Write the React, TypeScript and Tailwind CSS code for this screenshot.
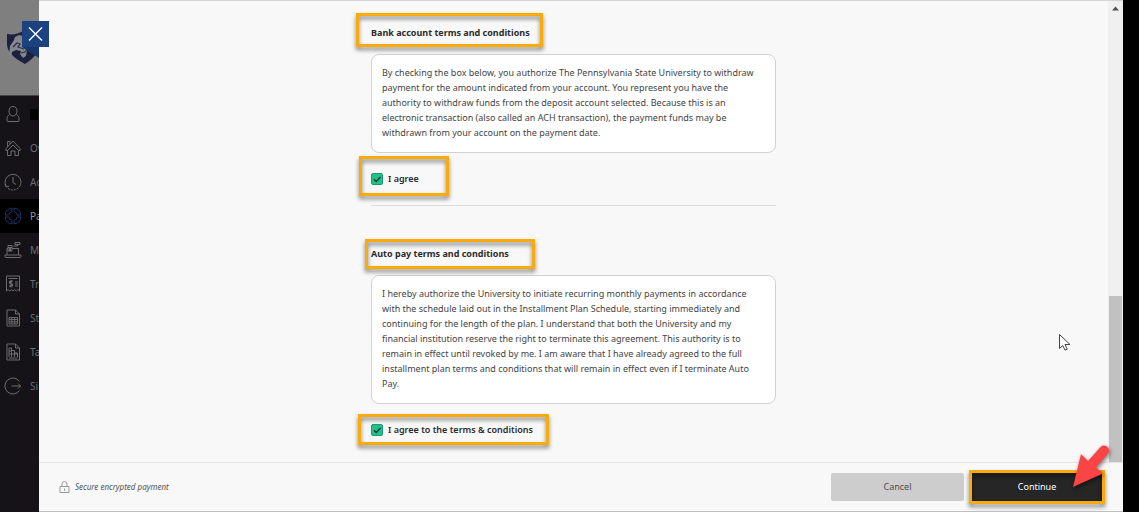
import React from 'react';

const ICON = 'w-[18px] h-[18px] shrink-0';

const line = {
  fill: 'none',
  stroke: 'currentColor',
  strokeWidth: 1,
  viewBox: '0 0 18 18',
  'aria-hidden': true,
};

const PersonIcon = () => (
  <svg {...line} className={ICON}>
    <path d="M9 1.500C6.400 1.500 5 3.400 5 6s1.400 5 4 5 4-2.400 4-5-1.400-4.500-4-4.500z" />
    <path d="M5.500 9.500C4 10.500 3 11.500 3 14v1.500c0 .7.3 1 1 1h10c.7 0 1-.3 1-1V14c0-2.500-1-3.500-2.500-4.500" />
  </svg>
);

const HomeIcon = () => (
  <svg {...line} className={ICON}>
    <path d="M2 9.500L9 2l7 7.500M3.500 7.500V2.500h2.500V5M2 9.500V11.500h1.500L9 6l5.500 5.500H16V9.500" />
    <path d="M3.500 11.500v5h3.500V12h4v4.500h3.500v-5" />
  </svg>
);

const HistoryIcon = () => (
  <svg {...line} className={ICON}>
    <path d="M2.200 13.500A8 8 0 1 1 17 9c0 2-.7 3.800-1.800 5M1 11l1.200 3 3-.8M9 4v5.500l3 2" />
    <path d="M4 15.500c3 2.200 7.500 2 10.500-.7" strokeDasharray="2 1" />
  </svg>
);

const PaymentIcon = () => (
  <svg {...line} className="w-[18px] h-[18px] shrink-0 text-[#22336a]">
    <circle cx="9" cy="9" r="8" strokeDasharray="10.500 2" strokeDashoffset="-1" />
    <circle cx="9" cy="9" r="4.500" strokeDasharray="5 2" strokeDashoffset="-1" />
    <path d="M8 1v3.500M10 1v3.500M8 13.500V17M10 13.500V17M1 8h3.500M1 10h3.500M13.500 8H17M13.500 10H17" />
  </svg>
);

const MethodsIcon = () => (
  <svg {...line} className={ICON}>
    <path d="M3 14V7.500h1M14.500 14V7.500H8M1 14h16v1.500c0 .6-.4 1-1 1H2c-.6 0-1-.4-1-1z" />
    <path d="M4 10V4.500h4V10zM4 6.500h4M11 1.500h5v2h-5zM13.500 3.500V5H9.500M5.500 7v3M6.500 7v3" />
  </svg>
);

const ReceiptIcon = () => (
  <svg {...line} className={ICON}>
    <path d="M2.500 1h13v15l-1.600-1.500L12.300 16l-1.600-1.500L9 16l-1.600-1.500L5.800 16l-1.700-1.500L2.500 16zM4.500 3.500h9M11 7h3M11 9h3M11 11h3" />
    <path d="M8.500 6.500c-1-.8-3.200-.6-3.200.8 0 1.700 3.400 1 3.400 2.700 0 1.400-2.400 1.600-3.600.7M7 5v7.500" strokeWidth="1.300" />
  </svg>
);

const StatementIcon = () => (
  <svg {...line} className={ICON}>
    <path d="M3 1h8.500L15.500 5v12H3zM11.500 1v4h4" />
    <path d="M5 8.500h8.500v6.500H5zM5 10.500h8.500M5 12.800h8.500M7.800 8.500V15M10.700 8.500V15" />
  </svg>
);

const TaxIcon = () => (
  <svg {...line} className={ICON}>
    <path d="M3 1h8.500L15.500 5v12H3zM11.500 1v4h4" />
    <path d="M5 14V5h2.500v9M7.500 7.500h3V14M10.500 10h3v4M5 8h2.500M5 11h8.500M5 15h8.500" />
  </svg>
);

const SignOutIcon = () => (
  <svg {...line} className={ICON}>
    <path d="M15.500 4.500a8 8 0 1 0 0 9M7.500 9h9M14 6.500L16.500 9 14 11.500" />
  </svg>
);

const NAV_ITEMS = [
  { id: 'overview', label: 'Ov', Icon: HomeIcon },
  { id: 'activity', label: 'Ac', Icon: HistoryIcon },
  { id: 'payment', label: 'Pa', Icon: PaymentIcon, active: true },
  { id: 'methods', label: 'M', Icon: MethodsIcon },
  { id: 'transactions', label: 'Tr', Icon: ReceiptIcon },
  { id: 'statements', label: 'St', Icon: StatementIcon },
  { id: 'tax', label: 'Ta', Icon: TaxIcon },
  { id: 'sign-out', label: 'Si', Icon: SignOutIcon },
];

const Sidebar: React.FC = () => (
  <aside className="w-[39px] shrink-0 overflow-hidden bg-[#151317] text-[#6c6c6f]">
    <div className="h-24 bg-[#7f7f7f] border-b border-[#444] pt-[31px] pl-[7px]">
      <svg viewBox="0 0 32 34" className="w-8 h-[34px]" aria-label="University shield" role="img">
        <path d="M0 3C6 4 11 3 16 0c5 3 10 4 16 3v10c0 9-6 15-14 20C7 27 0 21 0 13z" fill="#1d2140" />
        <path d="M8 6l4-2 4 1 5 3 5 8-2 5-4-2-1 6-3 2-3-4 1-3-5-1-4 2-1 6-2-3 1-9 4-6z" fill="#85878d" />
        <path d="M6 16l4-4 3 1-2 3 6 2M14 22l4-1 2-3M19 12l3 3" stroke="#2b2f4a" strokeWidth="1.200" fill="none" />
      </svg>
    </div>
    <div className="flex items-center h-[34px] pl-1 mt-px gap-2">
      <PersonIcon />
      <span className="w-2 h-[11px] shrink-0 bg-black" />
    </div>
    <nav>
      {NAV_ITEMS.map(({ id, label, Icon, active }) => (
        <a
          key={id}
          href={`#${id}`}
          className={`flex items-center h-[34px] pl-1 gap-2 text-[10px] whitespace-nowrap ${active ? 'bg-black text-[#9a9a9c]' : ''}`}
        >
          <Icon />
          {label}
        </a>
      ))}
    </nav>
  </aside>
);

const Highlight: React.FC<{ className: string }> = ({ className }) => (
  <span
    className={`absolute pointer-events-none border-3 border-[#f9ab0b] drop-shadow-[0_3px_2px_rgba(0,0,0,0.5)] ${className}`}
  />
);

interface TermsProps {
  id: string;
  title: string;
  text: string;
  agreeLabel: string;
  titleMark: string;
  agreeMark: string;
}

const Terms: React.FC<TermsProps> = ({ id, title, text, agreeLabel, titleMark, agreeMark }) => (
  <section>
    <div className="relative">
      <h2 className="font-bold text-[9px] leading-5 text-[#2b2b2b]">{title}</h2>
      <Highlight className={titleMark} />
    </div>
    <p className="mt-[11px] pl-2.5 pr-4 pt-2.5 pb-3 rounded-lg border border-[#d2d2d2] bg-white text-[9px] leading-[15px] text-[#444]">
      {text}
    </p>
    <div className="relative flex items-center mt-4 h-5">
      <input
        id={id}
        type="checkbox"
        defaultChecked
        className="peer appearance-none w-3 h-3 rounded-xs border border-[#1c9a6d] bg-white checked:bg-[#22c08a]"
      />
      <svg
        viewBox="0 0 12 12"
        className="absolute left-0 w-3 h-3 pointer-events-none invisible peer-checked:visible"
        aria-hidden="true"
      >
        <path d="M3 6.300l2.200 2.200L9.500 4" fill="none" stroke="#173b2d" strokeWidth="1.400" />
      </svg>
      <label htmlFor={id} className="pl-[5px] text-[9px] leading-5 font-semibold text-[#2b2b2b]">
        {agreeLabel}
      </label>
      <Highlight className={agreeMark} />
    </div>
  </section>
);

const App: React.FC = () => {
  return (
    <div className="relative flex min-h-screen bg-black font-['Noto_Sans','Open_Sans',sans-serif]">
      <Sidebar />

      <div className="flex-1 min-w-0 flex flex-col mr-4 bg-[#f8f8f8] border-t border-b border-t-[#d5d5d5] border-b-[#bfbfc4]">
        <div className="flex-1 flex">
          <main className="flex-1 pt-[22px] pb-[22px]">
            <div className="max-w-[405px] mx-auto">
              <Terms
                id="agree-bank"
                title="Bank account terms and conditions"
                text="By checking the box below, you authorize The Pennsylvania State University to withdraw payment for the amount indicated from your account. You represent you have the authority to withdraw funds from the deposit account selected. Because this is an electronic transaction (also called an ACH transaction), the payment funds may be withdrawn from your account on the payment date."
                agreeLabel="I agree"
                titleMark="-left-[15px] -top-2.5 w-[187px] h-[34px]"
                agreeMark="-left-3 -top-[13px] w-[90px] h-10"
              />
              <hr className="mt-4 mb-[38px] border-[#dcdcdc]" />
              <Terms
                id="agree-autopay"
                title="Auto pay terms and conditions"
                text="I hereby authorize the University to initiate recurring monthly payments in accordance with the schedule laid out in the Installment Plan Schedule, starting immediately and continuing for the length of the plan. I understand that both the University and my financial institution reserve the right to terminate this agreement. This authority is to remain in effect until revoked by me. I am aware that I have already agreed to the full installment plan terms and conditions that will remain in effect even if I terminate Auto Pay."
                agreeLabel="I agree to the terms & conditions"
                titleMark="-left-1.5 -top-[5px] w-[170px] h-[30px]"
                agreeMark="-left-[13px] -top-1.5 w-[191px] h-[31px]"
              />
            </div>
          </main>

          {/* Scrollbar track */}
          <div className="w-[15px] flex flex-col justify-between bg-[#f0f0f0]">
            <svg viewBox="0 0 15 12" className="w-[15px] h-3" aria-hidden="true">
              <path d="M4 9.500L7.500 5.500 11 9.500z" fill="#505050" />
            </svg>
            <div className="h-[36%] ml-px mr-px bg-[#c1c1c1]" />
          </div>
        </div>

        <footer className="flex items-center justify-between h-[49px] pl-5 pr-[21px] border-t border-[#e6e6e6]">
          <div className="flex items-center gap-[5px] text-[8px] italic text-[#555]">
            <svg viewBox="0 0 11 12" className="w-[11px] h-3" fill="none" stroke="#999" aria-hidden="true">
              <path d="M1 5.500h9v6H1zM3 5.500V3a2.500 2.500 0 0 1 5 0v2.500M5.500 7.500v2.500" />
            </svg>
            Secure encrypted payment
          </div>
          <div className="flex gap-2 text-[9px]">
            <button type="button" className="w-[133px] h-7 rounded-xs bg-[#cdcdcd] text-[#4f4f4f]">
              Cancel
            </button>
            <div className="relative">
              <button type="button" className="w-[130px] h-7 bg-[#262626] text-white">
                Continue
              </button>
              <Highlight className="-inset-[3px]" />
              <svg
                viewBox="0 0 38 43"
                className="absolute -right-2 -top-7 w-[38px] h-[43px] pointer-events-none drop-shadow-[1px_2px_2px_rgba(0,0,0,0.5)]"
                aria-hidden="true"
              >
                <path
                  d="M1 42L9 9l7 7L28 2.500C30 0 33 0 35 1.500s3 5 1 7L24 22.500l7 6z"
                  fill="#fb4444"
                />
              </svg>
            </div>
          </div>
        </footer>
      </div>

      <button type="button" aria-label="Close" className="absolute left-[22px] top-[21px] w-[27px] h-[38px]">
        <svg viewBox="0 0 27 38" className="w-[27px] h-[38px]" aria-hidden="true">
          <path d="M0 26h17v11z" fill="#17366b" />
          <path d="M0 0h27v26H0z" fill="#1c427f" />
          <path d="M7 6.500L20 19.500M20 6.500L7 19.500" stroke="#fff" strokeWidth="1.400" />
        </svg>
      </button>

      {/* Mouse pointer */}
      <svg viewBox="0 0 12 17" className="absolute right-[68px] top-[334px] w-3 h-[17px] pointer-events-none" aria-hidden="true">
        <path d="M.5.5v14l3.300-3 2.200 4.700 2.200-1L6 10.500h5z" fill="#fff" stroke="#444" />
      </svg>
    </div>
  );
};

export default App;
